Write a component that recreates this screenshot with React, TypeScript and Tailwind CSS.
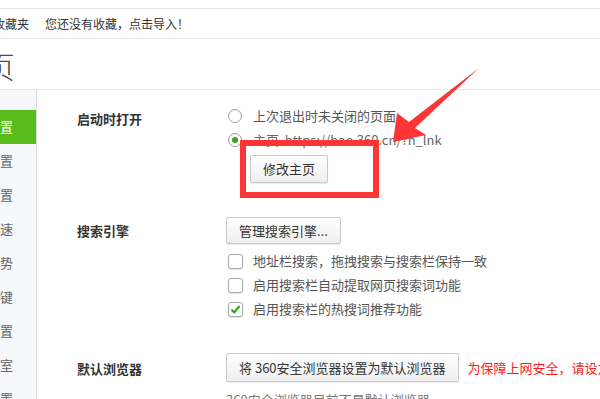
import React from "react";

const font = { fontFamily: '"Noto Sans CJK SC", "Liberation Sans", sans-serif' };

function Radio({ checked }: { checked?: boolean }) {
  return (
    <span className="w-[14px] h-[14px] rounded-full border border-[#a0a0a0] bg-white flex items-center justify-center shadow-[inset_0_1px_1px_rgba(0,0,0,0.08)]">
      {checked && <span className="w-[6px] h-[6px] rounded-full bg-[#32a51a]" />}
    </span>
  );
}

function Check({ checked }: { checked?: boolean }) {
  return (
    <span className="w-[15px] h-[15px] rounded-[3px] border border-[#a8a8a8] bg-white flex items-center justify-center shadow-[0_1px_1px_rgba(0,0,0,0.1)]">
      {checked && (
        <svg width="11" height="11" viewBox="0 0 11 11">
          <path d="M1.5 5.8 L4.2 8.5 L9.5 2" stroke="#2ea31a" strokeWidth="2" fill="none" />
        </svg>
      )}
    </span>
  );
}

function Btn({ children, h }: { children: React.ReactNode; h: string }) {
  return (
    <div
      className={`inline-flex items-center justify-center px-[12px] ${h} border border-[#c8c8c8] rounded-[2px] bg-gradient-to-b from-white to-[#efefef] text-[13px] text-[#333] shadow-[0_1px_1px_rgba(0,0,0,0.08)]`}
    >
      {children}
    </div>
  );
}

export default function App() {
  const side = ["置", "置", "置", "速", "势", "键", "置", "室", "置"];
  return (
    <div className="relative w-[600px] h-[399px] overflow-hidden bg-white" style={font}>
      <div className="h-[8px]" />
      <div className="h-[31px] border-t border-b border-[#e3e3e3] flex items-center text-[12px] text-[#333]">
        <span className="ml-[-7px]">收藏夹</span>
        <span className="ml-[16px]">您还没有收藏，点击导入！</span>
      </div>
      <div className="h-[51px] border-b border-[#e6e6e6] flex items-center">
        <span className="ml-[-15px] text-[30px] leading-none text-[#4a4a4a] font-light mt-[2px]">页</span>
      </div>
      <div className="flex h-[400px]">
        <div className="w-[37px] shrink-0 bg-[#f7f8fa] border-r border-[#d8dbe0] pt-[20px]">
          {side.map((s, i) => (
            <div
              key={i}
              className={`h-[34px] flex items-center justify-end pr-[23px] text-[13px] ${
                i === 0 ? "bg-[#58bd1c] text-white w-[36px]" : "text-[#666]"
              }`}
            >
              {s}
            </div>
          ))}
        </div>
        <div className="flex-1 pl-[40px] pt-[14px] text-[13px] text-[#555]">
          <div className="flex">
            <div className="w-[149px] pt-[3px] font-bold text-[#333] leading-[24px]">启动时打开</div>
            <div className="flex flex-col">
              <div className="h-[24px] flex items-center">
                <span className="ml-[2px]"><Radio /></span>
                <span className="ml-[11px]">上次退出时未关闭的页面</span>
              </div>
              <div className="h-[24px] flex items-center">
                <span className="ml-[2px]"><Radio checked /></span>
                <span className="ml-[11px] text-[#666]">主页&nbsp;&nbsp;https://hao.360.cn/?h_lnk</span>
              </div>
              <div className="mt-[3px] ml-[24px]">
                <Btn h="h-[28px]">修改主页</Btn>
              </div>
            </div>
          </div>
          <div className="flex mt-[34px]">
            <div className="w-[149px] font-bold text-[#333] leading-[27px]">搜索引擎</div>
            <div className="flex flex-col">
              <div>
                <Btn h="h-[27px]">管理搜索引擎...</Btn>
              </div>
              <div className="mt-[5px] h-[24px] flex items-center">
                <span className="ml-[2px]"><Check /></span>
                <span className="ml-[10px] whitespace-nowrap">地址栏搜索，拖拽搜索与搜索栏保持一致</span>
              </div>
              <div className="h-[24px] flex items-center">
                <span className="ml-[2px]"><Check /></span>
                <span className="ml-[10px] whitespace-nowrap">启用搜索栏自动提取网页搜索词功能</span>
              </div>
              <div className="h-[24px] flex items-center">
                <span className="ml-[2px]"><Check checked /></span>
                <span className="ml-[10px] whitespace-nowrap">启用搜索栏的热搜词推荐功能</span>
              </div>
            </div>
          </div>
          <div className="flex mt-[32px]">
            <div className="w-[149px] font-bold text-[#333] leading-[29px] pt-[1px]">默认浏览器</div>
            <div className="flex flex-col">
              <div className="flex items-center whitespace-nowrap">
                <Btn h="h-[29px]">将 360安全浏览器设置为默认浏览器</Btn>
                <span className="ml-[9px] text-[#ff1a1a]">为保障上网安全，请设为默认浏览器</span>
              </div>
              <div className="mt-[8px] text-[#777] whitespace-nowrap">360安全浏览器目前不是默认浏览器</div>
            </div>
          </div>
        </div>
      </div>
      <div className="absolute left-[240px] top-[140px] w-[139px] h-[58px] border-[6px] border-[#ff3535]" />
      <svg className="absolute left-0 top-0" width="600" height="399" viewBox="0 0 600 399">
        <polygon points="393,142 397,113 409,122 479,68 415,128 426,135" fill="#ff3535" />
      </svg>
    </div>
  );
}
